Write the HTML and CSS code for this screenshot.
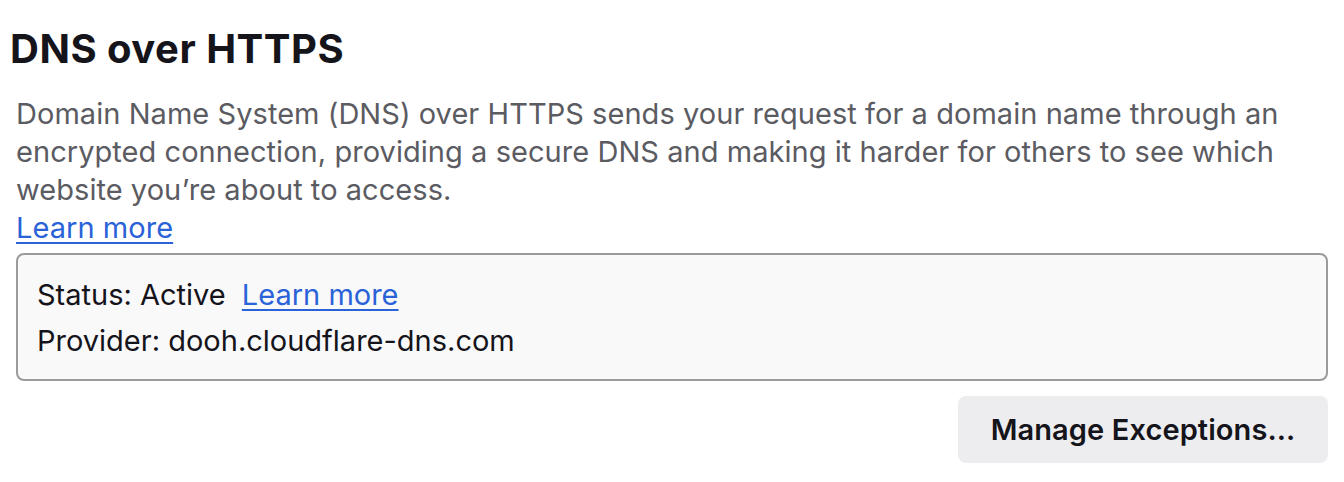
FILE: index.html
```html
<!DOCTYPE html>
<html lang="en">
<head>
<meta charset="utf-8">
<link rel="stylesheet" href="styles.css">
</head>
<body>
<section class="doh">
  <h1 class="title">DNS over HTTPS</h1>
  <p class="desc">Domain Name System (DNS) over HTTPS sends your request for a domain name through an encrypted connection, providing a secure DNS and making it harder for others to see which website you’re about to access.</p>
  <a class="link" href="#">Learn more</a>
  <div class="status-box">
    <div class="status-line">Status: Active <a class="link" href="#">Learn more</a></div>
    <div class="status-line">Provider: dooh.cloudflare-dns.com</div>
  </div>
  <div class="actions">
    <button class="btn">Manage Exceptions…</button>
  </div>
</section>
</body>
</html>
```
FILE: styles.css
```css
html, body {
  margin: 0;
  padding: 0;
  background: #ffffff;
}
body {
  font-family: Inter, "Liberation Sans", sans-serif;
  color: #15141a;
}
.doh {
  padding: 24px 16px 0 16px;
  display: flex;
  flex-direction: column;
  align-items: flex-start;
}
.title {
  margin: 0 0 0 -6px;
  font-size: 40px;
  font-weight: 700;
  line-height: 50px;
  letter-spacing: 0.5px;
}
.desc {
  margin: 21px 0 0 0;
  font-size: 29px;
  line-height: 38px;
  letter-spacing: 0.05px;
  color: #5b5b62;
  max-width: 1300px;
}
.link {
  color: #2a62d8;
  text-decoration: underline;
  text-decoration-thickness: 2px;
  text-underline-offset: 4px;
  font-size: 29px;
  line-height: 38px;
  letter-spacing: 0.05px;
}
.status-box {
  align-self: stretch;
  margin-top: 6px;
  border: 2px solid #9b9b9e;
  border-radius: 8px;
  background: #f9f9fa;
  padding: 17px 19px 15px 19px;
  font-size: 29px;
  line-height: 46px;
  letter-spacing: 0;
}
.status-line .link {
  margin-left: 8px;
  line-height: 46px;
  letter-spacing: 0;
}
.actions {
  align-self: stretch;
  display: flex;
  justify-content: flex-end;
  margin-top: 15px;
}
.btn {
  font-family: inherit;
  font-size: 29px;
  font-weight: 600;
  letter-spacing: 0.1px;
  color: #15141a;
  background: #ededf0;
  border: none;
  border-radius: 8px;
  width: 370px;
  height: 67px;
  padding: 0;
}
```
